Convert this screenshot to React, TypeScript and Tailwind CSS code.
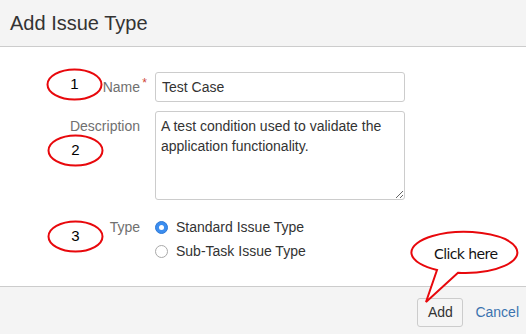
import React from 'react';

const Marker = ({ n, pos }: { n: string; pos: string }) => (
  <div className={`absolute ${pos} w-[57px] h-[33px] flex items-center justify-center pointer-events-none`}>
    <svg className="absolute inset-0" width="57" height="33" viewBox="0 0 57 33">
      <ellipse cx="28.5" cy="16.5" rx="27" ry="15" fill="none" stroke="#e8080c" strokeWidth="2" />
    </svg>
    <span className="relative text-[15px] text-black font-['Liberation_Sans',sans-serif]">{n}</span>
  </div>
);

const Callout = () => (
  <svg className="absolute left-0 top-0 pointer-events-none" width="526" height="334" viewBox="0 0 526 334">
    <path
      d="M 437 270 A 53 20.5 0 1 1 458 272.8 L 426 302 Z"
      fill="#ffffff"
      stroke="#e8080c"
      strokeWidth="2"
      strokeLinejoin="miter"
    />
    <text
      x="434"
      y="259"
      fontSize="14"
      textLength="64"
      fill="#111"
      fontFamily="'DejaVu Sans', sans-serif"
    >
      Click here
    </text>
  </svg>
);

const Radio = ({ checked, label }: { checked?: boolean; label: string }) => (
  <div className="flex items-center h-[24px] gap-[8px]">
    {checked ? (
      <span className="w-[13px] h-[13px] rounded-full bg-[#3b8def] border border-[#2f7ad6] flex items-center justify-center">
        <span className="w-[5px] h-[5px] rounded-full bg-white" />
      </span>
    ) : (
      <span className="w-[13px] h-[13px] rounded-full bg-white border border-[#a9a9a9]" />
    )}
    <span className="text-[14px] text-[#333]">{label}</span>
  </div>
);

export default function App() {
  return (
    <div className="relative w-[526px] h-[334px] bg-white flex flex-col overflow-hidden font-['Liberation_Sans',Arial,sans-serif]">
      {/* Header */}
      <div className="h-[47px] shrink-0 bg-[#f4f4f4] border-b border-[#cccccc] px-[10px] flex items-center">
        <h2 className="text-[20px] text-[#333] leading-none pb-[1px]">Add Issue Type</h2>
      </div>

      {/* Form */}
      <div className="flex-1 pt-[25px]">
        <div className="grid grid-cols-[140px_250px] gap-x-[15px] items-center">
          <label className="text-right text-[14px] text-[#707070] relative">
            Name
            <span className="absolute -right-[7px] -top-[3px] text-[#d04437] text-[12px]">*</span>
          </label>
          <div className="h-[30px] border border-[#cccccc] rounded-[3px] px-[6px] flex items-center text-[14px] text-[#333]">
            Test Case
          </div>
        </div>

        <div className="grid grid-cols-[140px_250px] gap-x-[15px] items-start mt-[9px]">
          <label className="text-right text-[14px] leading-[20px] text-[#707070] pt-[5px]">Description</label>
          <textarea
            readOnly
            defaultValue="A test condition used to validate the application functionality."
            className="h-[89px] border border-[#cccccc] rounded-[3px] px-[5px] pt-[4px] text-[14px] leading-[20px] text-[#333] outline-none font-['Liberation_Sans',Arial,sans-serif]"
          />
        </div>

        <div className="grid grid-cols-[140px_250px] gap-x-[15px] items-start mt-[15px]">
          <label className="text-right text-[14px] leading-[24px] text-[#707070]">Type</label>
          <div className="flex flex-col">
            <Radio checked label="Standard Issue Type" />
            <Radio label="Sub-Task Issue Type" />
          </div>
        </div>
      </div>

      {/* Footer */}
      <div className="h-[48px] shrink-0 bg-[#f4f4f4] border-t border-[#cccccc] flex items-start justify-end pt-[11px] pr-[7px]">
        <button className="w-[46px] h-[29px] border border-[#cccccc] rounded-[3px] bg-[#f5f5f5] text-[14px] text-[#333]">
          Add
        </button>
        <a className="ml-[12px] h-[29px] flex items-center text-[14px] text-[#3b73af]">Cancel</a>
      </div>

      {/* Annotations */}
      <Marker n="1" pos="left-[46px] top-[68px]" />
      <Marker n="2" pos="left-[47px] top-[134px]" />
      <Marker n="3" pos="left-[47px] top-[220px]" />
      <Callout />
    </div>
  );
}
